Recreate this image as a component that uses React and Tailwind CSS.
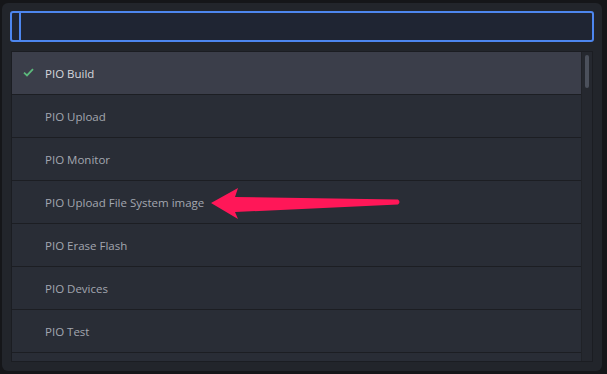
import React from "react";

const items = [
  "PIO Build",
  "PIO Upload",
  "PIO Monitor",
  "PIO Upload File System image",
  "PIO Erase Flash",
  "PIO Devices",
  "PIO Test",
  "",
];

export default function App() {
  return (
    <div
      className="relative w-[607px] h-[374px] bg-[#151619] pt-[3px] pb-[3px] pl-[2px] pr-[5px] overflow-hidden"
      style={{ fontFamily: '"Open Sans", "Noto Sans", sans-serif' }}
    >
      <div className="h-full rounded-[6px] bg-[#22252b] px-[8px] pt-[8px] pb-[9px] flex flex-col gap-[9px]">
        <div className="h-[31px] rounded-[3px] border-2 border-[#4d86ee] bg-[#1f2533] flex items-stretch pl-[7px] shrink-0">
          <div className="w-[2px] bg-[#4d86ee]" />
        </div>
        <div className="mx-[1px] flex-1 border border-[#1b1d22] bg-[#292d36] flex overflow-hidden">
          <div className="flex-1 flex flex-col">
            {items.map((t, i) => (
              <div
                key={i}
                className={
                  "h-[43px] shrink-0 border-b border-[#1c1e23] flex items-center pl-[33px] pt-[2px] text-[11.5px] relative " +
                  (i === 0 ? "bg-[#3b3e4a] text-[#d6d8dd]" : "text-[#a3a7b0]")
                }
              >
                {i === 0 && (
                  <svg
                    className="absolute left-[11px] top-[16px]"
                    width="11"
                    height="9"
                    viewBox="0 0 11 9"
                  >
                    <path
                      d="M1 4.6 L4 7.4 L10 1.2"
                      fill="none"
                      stroke="#5cb87c"
                      strokeWidth="1.8"
                    />
                  </svg>
                )}
                {t}
              </div>
            ))}
          </div>
          <div className="w-[11px] bg-[#25282f] border-l border-[#202227] pt-[3px] flex justify-center">
            <div className="w-[4px] h-[33px] rounded-full bg-[#4b505b]" />
          </div>
        </div>
      </div>
      <svg
        className="absolute left-0 top-0 pointer-events-none"
        width="607"
        height="374"
        viewBox="0 0 607 374"
      >
        <path
          d="M211 203 L238 188 L235 197 L398 199.5 Q401 202 398 204.5 L235 212 L238 219 Z"
          fill="#ff1758"
        />
      </svg>
    </div>
  );
}
